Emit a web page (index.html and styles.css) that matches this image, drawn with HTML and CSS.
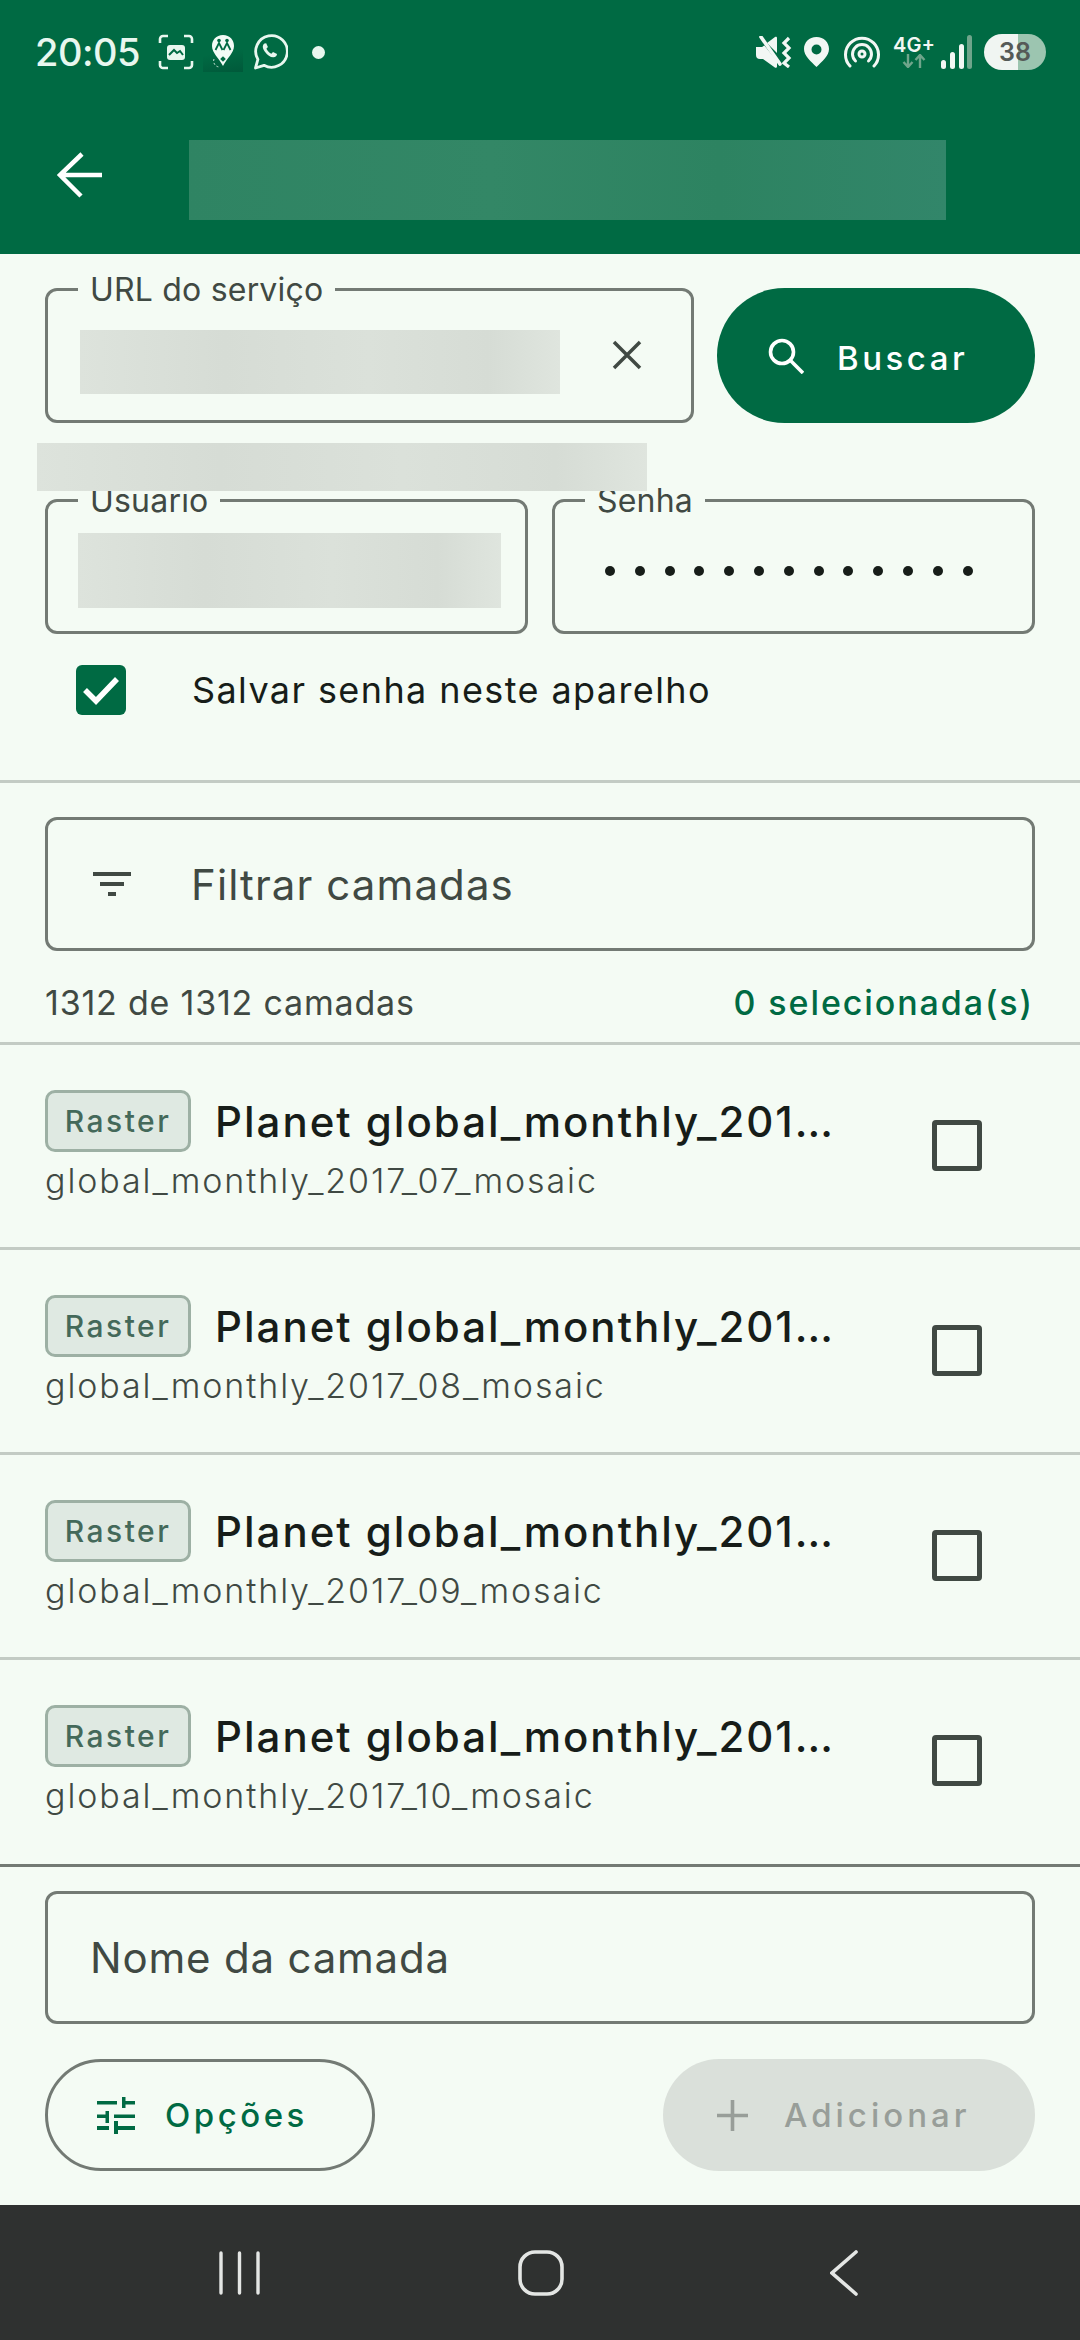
FILE: index.html
```html
<!DOCTYPE html>
<html lang="pt">
<head>
    <meta charset="UTF-8">
    <title>Camadas</title>
    <link rel="stylesheet" href="styles.css">
</head>
<body>
<div class="screen">
    <header class="top">
        <div class="status">
            <div class="status-left">
                <span class="clock">20:05</span>
                <svg class="ic-shot" viewBox="0 0 36 36" fill="none" stroke="#e8f7ef" stroke-width="2.6">
                    <path d="M2 9V5a3 3 0 0 1 3-3h5M26 2h5a3 3 0 0 1 3 3v4M34 27v4a3 3 0 0 1-3 3h-5M10 34H5a3 3 0 0 1-3-3v-4"/>
                    <rect x="9" y="11" width="18" height="15" rx="3" fill="#e8f7ef" stroke="none"/>
                    <path d="M11 21l5-5 3 3 3-2 3 4" stroke="#006a43" stroke-width="2"/>
                </svg>
                <span class="tile">
                    <svg viewBox="0 0 40 40" width="40" height="40">
                        <path d="M20 3c-7 0-11 5-11 11 0 7 7 12 11 20 4-8 11-13 11-20 0-6-4-11-11-11z" fill="#f2fbf6"/>
                        <circle cx="16" cy="8.500" r="1.800" fill="#006a43"/>
                        <circle cx="24" cy="8.500" r="1.800" fill="#006a43"/>
                        <path d="M12.500 18l3.500-7 3.500 7M20.500 18l3.500-7 3.500 7" fill="none" stroke="#006a43" stroke-width="1.800"/>
                        <path d="M11 27a6 6 0 0 0 6 8" fill="none" stroke="#cfe8da" stroke-width="1" stroke-dasharray="2 2"/>
                        <rect x="18" y="25" width="4" height="4" transform="rotate(45 20 27)" fill="#006a43"/>
                    </svg>
                </span>
                <svg class="ic-wa" viewBox="0 0 36 38" fill="none" stroke="#e8f7ef" stroke-width="2.800">
                    <path d="M3.500 35l2.400-8.600A15.800 15.800 0 1 1 12 32.300z" stroke-linejoin="round"/>
                    <path d="M12.500 10.500c-2 1.500-2.500 4 .2 8 2.800 4 6 6 8.800 5.800 2-.2 3.500-1.600 3.500-3.300l-4-2-1.600 1.800c-2-.8-4-2.800-5-5l1.500-1.700-1.700-3.900z" fill="#e8f7ef" stroke="none"/>
                </svg>
                <span class="dot"></span>
            </div>
            <div class="status-right">
                <svg class="ic-mute" viewBox="0 0 36 32" fill="#f2f7f4">
                    <path d="M0 11h6l3-2 12 12v9.500c0 1.500-1.500 1.700-2.500.8L7 23H4a4 4 0 0 1-4-4zM11 7l8-6c1-.8 2-.2 2 1v15z"/>
                    <path d="M2 -1l24 30" stroke="#006a43" stroke-width="3"/>
                    <path d="M5 1l19 27" stroke="#f2f7f4" stroke-width="3.600" stroke-linecap="round"/>
                    <path d="M33 2l-5 5 5 5-5 5 5 5-5 5 5 4" fill="none" stroke="#f2f7f4" stroke-width="3.200"/>
                </svg>
                <svg class="ic-pin" viewBox="0 0 25 30">
                    <path fill-rule="evenodd" fill="#f2f7f4" d="M12.500 0C5 0 0 5.500 0 12c0 7 7 12.500 12.500 18C18 24.500 25 19 25 12 25 5.500 20 0 12.500 0zm0 7.500a5 5 0 1 1 0 10 5 5 0 0 1 0-10z"/>
                </svg>
                <svg class="ic-cast" viewBox="0 0 36 32" fill="none" stroke="#f2f7f4" stroke-width="3" stroke-linecap="round">
                    <path d="M6 30A16.500 16.500 0 1 1 30 30"/>
                    <path d="M11.500 25a9.500 9.500 0 1 1 13 0"/>
                    <circle cx="18" cy="18" r="3"/>
                </svg>
                <div class="net">
                    <span class="net-label">4G+</span>
                    <svg viewBox="0 0 24 14" width="24" height="14" fill="none" stroke="#6fa58b" stroke-width="2.400">
                        <path d="M6 0v12M1.500 8L6 13l4.500-5M18 14V2M13.500 6L18 1l4.500 5"/>
                    </svg>
                </div>
                <svg class="ic-signal" viewBox="0 0 31 34">
                    <rect x="0" y="25" width="5" height="9" rx="2.500" fill="#f2f7f4"/>
                    <rect x="9" y="17" width="5" height="17" rx="2.500" fill="#f2f7f4"/>
                    <rect x="18" y="9" width="5" height="25" rx="2.500" fill="#f2f7f4"/>
                    <rect x="26" y="0" width="5" height="34" rx="2.500" fill="#6fa58b"/>
                </svg>
                <span class="battery">38</span>
            </div>
        </div>
        <div class="toolbar">
            <svg class="ic-back" viewBox="0 0 46 46" fill="none" stroke="#fff" stroke-width="4.500">
                <path d="M46 23H4M26 2L4 23l21 21"/>
            </svg>
            <div class="blur blur-title"></div>
        </div>
    </header>

    <main class="content">
        <section class="connect">
            <div class="url-row">
                <div class="field field-url">
                    <span class="field-label">URL do serviço</span>
                    <div class="blur blur-url"></div>
                    <svg class="ic-clear" viewBox="0 0 30 30" fill="none" stroke="#404943" stroke-width="3.500">
                        <path d="M2 2l26 26M28 2L2 28"/>
                    </svg>
                </div>
                <button class="btn btn-fill">
                    <svg class="ic-search" viewBox="0 0 36 36" fill="none" stroke="#fff" stroke-width="3.600">
                        <circle cx="14" cy="14" r="11.500"/>
                        <path d="M22 22l13 13"/>
                    </svg>
                    <span class="btn-text">Buscar</span>
                </button>
            </div>
            <div class="blur blur-msg"></div>
            <div class="login-row">
                <div class="field field-half">
                    <span class="field-label">Usuario</span>
                    <div class="blur blur-user"></div>
                </div>
                <div class="field field-half">
                    <span class="field-label">Senha</span>
                    <div class="dots">
                        <i></i><i></i><i></i><i></i><i></i><i></i><i></i><i></i><i></i><i></i><i></i><i></i><i></i>
                    </div>
                </div>
            </div>
            <label class="save">
                <span class="check">
                    <svg viewBox="0 0 50 50" width="50" height="50" fill="none" stroke="#fff" stroke-width="5.500">
                        <path d="M9 25l11 11 21-22"/>
                    </svg>
                </span>
                Salvar senha neste aparelho
            </label>
        </section>

        <section class="filter-box">
            <div class="field field-filter">
                <svg class="ic-filter" viewBox="0 0 38 25" fill="#404943">
                    <rect x="0" y="0" width="38" height="4"/>
                    <rect x="7" y="10" width="24" height="4"/>
                    <rect x="15" y="20" width="8" height="4"/>
                </svg>
                <span class="filter-text">Filtrar camadas</span>
            </div>
            <div class="counts">
                <span>1312 de 1312 camadas</span>
                <span class="selected">0 selecionada(s)</span>
            </div>
        </section>

        <ul class="layers">
            <li class="layer">
                <div class="layer-text">
                    <div class="layer-head"><span class="chip">Raster</span><span class="layer-title">Planet global_monthly_201…</span></div>
                    <div class="layer-sub">global_monthly_2017_07_mosaic</div>
                </div>
                <span class="box"></span>
            </li>
            <li class="layer">
                <div class="layer-text">
                    <div class="layer-head"><span class="chip">Raster</span><span class="layer-title">Planet global_monthly_201…</span></div>
                    <div class="layer-sub">global_monthly_2017_08_mosaic</div>
                </div>
                <span class="box"></span>
            </li>
            <li class="layer">
                <div class="layer-text">
                    <div class="layer-head"><span class="chip">Raster</span><span class="layer-title">Planet global_monthly_201…</span></div>
                    <div class="layer-sub">global_monthly_2017_09_mosaic</div>
                </div>
                <span class="box"></span>
            </li>
            <li class="layer">
                <div class="layer-text">
                    <div class="layer-head"><span class="chip">Raster</span><span class="layer-title">Planet global_monthly_201…</span></div>
                    <div class="layer-sub">global_monthly_2017_10_mosaic</div>
                </div>
                <span class="box"></span>
            </li>
        </ul>

        <section class="bottom">
            <div class="field field-name">Nome da camada</div>
            <div class="actions">
                <button class="btn btn-outline">
                    <svg class="ic-tune" viewBox="0 0 38 37" fill="#006a43">
                        <path d="M0 4h20v3.500H0zM25 0h3.500v4H38v3.500h-9.500V11H25zM0 17.500h8.500V14H12v12H8.500v-5H0zM17 17.500h21V21H17zM0 29h12v4H0zM17 24h4v5h17v4H21v4h-4z"/>
                    </svg>
                    Opções
                </button>
                <button class="btn btn-off">
                    <svg class="ic-plus" viewBox="0 0 31 31" fill="none" stroke="#989e99" stroke-width="3.600">
                        <path d="M15.500 0v31M0 15.500h31"/>
                    </svg>
                    Adicionar
                </button>
            </div>
        </section>
    </main>

    <nav class="navbar">
        <svg class="ic-recents" viewBox="0 0 41 44" fill="none" stroke="#e4e6e4" stroke-width="3.400" stroke-linecap="round">
            <path d="M2 2v40M20.500 2v40M39 2v40"/>
        </svg>
        <svg class="ic-home" viewBox="0 0 46 46" fill="none" stroke="#e4e6e4" stroke-width="3.600">
            <rect x="2" y="2" width="42" height="42" rx="15"/>
        </svg>
        <svg class="ic-navback" viewBox="0 0 28 46" fill="none" stroke="#e4e6e4" stroke-width="3.600" stroke-linecap="round">
            <path d="M26 2L2 23l24 21"/>
        </svg>
    </nav>
</div>
</body>
</html>
```

FILE: styles.css
```css
* {
    box-sizing: border-box;
}

body {
    margin: 0;
    background: #f4fbf4;
    font-family: "Inter", "Noto Sans", sans-serif;
    color: #171d19;
}

.screen {
    width: 1080px;
    height: 2340px;
    display: flex;
    flex-direction: column;
    overflow: hidden;
}

/* top */
.top {
    background: #006a43;
    height: 254px;
    flex: none;
}

.status {
    height: 104px;
    padding: 32px 34px 0 35px;
    display: flex;
    justify-content: space-between;
    align-items: flex-start;
}

.status-left,
.status-right {
    display: flex;
    align-items: center;
    height: 40px;
}

.clock {
    font-size: 38px;
    font-weight: 500;
    letter-spacing: -0.5px;
    color: #e8f7ef;
    width: 123px;
}

.ic-shot {
    width: 36px;
    height: 36px;
    margin-right: 9px;
}

.tile {
    width: 40px;
    height: 40px;
    margin-right: 9px;
    background: linear-gradient(170deg, #006a43 50%, #00593a);
}

.ic-wa {
    width: 36px;
    height: 38px;
}

.dot {
    width: 13px;
    height: 13px;
    border-radius: 50%;
    background: #e8f7ef;
    margin-left: 24px;
}

.ic-mute {
    width: 36px;
    height: 32px;
    margin-right: 12px;
}

.ic-pin {
    width: 25px;
    height: 30px;
    margin-right: 15px;
}

.ic-cast {
    width: 36px;
    height: 32px;
    margin-right: 13px;
}

.net {
    width: 42px;
    margin-right: 6px;
    display: flex;
    flex-direction: column;
    align-items: center;
    line-height: 18px;
}

.net-label {
    font-size: 20px;
    font-weight: 600;
    color: #f2f7f4;
    white-space: nowrap;
}

.ic-signal {
    width: 31px;
    height: 34px;
    margin-right: 12px;
}

.battery {
    width: 62px;
    height: 36px;
    border-radius: 18px;
    background: linear-gradient(90deg, #f0f5f2 0 55%, #9cc5b0 55%);
    color: #555a57;
    font-size: 25px;
    font-weight: 600;
    text-align: center;
    line-height: 36px;
}

.toolbar {
    height: 150px;
    display: flex;
    align-items: flex-start;
    padding: 36px 0 0 56px;
}

.ic-back {
    width: 46px;
    height: 46px;
    margin-top: 12px;
}

.blur {
    background: linear-gradient(90deg, #dde3dc, #d6dcd5 30%, #dbe1da 60%, #d6dcd5 85%, #dfe5de);
}

.blur-title {
    width: 757px;
    height: 80px;
    margin-left: 87px;
    background: linear-gradient(90deg, #2f8463, #338766 40%, #2d8361 70%, #32866a);
}

/* form */
.content {
    flex: 1;
    display: flex;
    flex-direction: column;
}

.connect {
    padding: 34px 45px 0;
    height: 529px;
    flex: none;
    border-bottom: 3px solid #c3cbc4;
}

.url-row {
    display: flex;
    gap: 23px;
}

.field {
    position: relative;
    border: 3px solid #737a74;
    border-radius: 12px;
    height: 135px;
}

.field-label {
    position: absolute;
    left: 30px;
    top: -19px;
    padding: 0 12px;
    background: #f4fbf4;
    font-size: 32px;
    line-height: 36px;
    letter-spacing: 0.200px;
    color: #404943;
    white-space: nowrap;
}

.field-url {
    width: 649px;
    display: flex;
    align-items: flex-start;
    padding: 39px 0 0 32px;
}

.blur-url {
    width: 480px;
    height: 64px;
}

.ic-clear {
    width: 30px;
    height: 30px;
    margin: 10px 0 0 52px;
}

.btn {
    display: flex;
    align-items: center;
    border-radius: 60px;
    font-family: inherit;
    font-weight: 500;
    font-size: 33px;
    letter-spacing: 3.500px;
    border: 0;
    padding: 0;
}

.btn-fill {
    width: 318px;
    height: 135px;
    background: #006a43;
    color: #fff;
    padding: 0 0 0 51px;
    border-radius: 68px;
}

.btn-text {
    padding-top: 4px;
}

.ic-search {
    width: 36px;
    height: 36px;
    margin: 0 33px 0 0;
}

.blur-msg {
    position: relative;
    z-index: 1;
    width: 610px;
    height: 48px;
    margin: 20px 0 8px -8px;
}

.login-row {
    display: flex;
    gap: 24px;
}

.field-half {
    width: 483px;
}

.blur-user {
    width: 423px;
    height: 75px;
    margin: 31px 0 0 30px;
}

.dots {
    display: flex;
    gap: 19.800px;
    padding: 64px 0 0 50px;
}

.dots i {
    width: 10px;
    height: 10px;
    border-radius: 50%;
    background: #171d19;
}

.save {
    display: flex;
    align-items: center;
    padding: 31px 0 0 31px;
    font-size: 36px;
    letter-spacing: 1.400px;
    color: #171d19;
}

.check {
    width: 50px;
    height: 50px;
    border-radius: 6px;
    background: #006a43;
    margin-right: 66px;
    display: block;
}

.filter-box {
    padding: 34px 45px 0;
    height: 262px;
    flex: none;
    border-bottom: 3px solid #c3cbc4;
}

.field-filter {
    height: 134px;
    display: flex;
    align-items: center;
    padding-left: 45px;
}

.ic-filter {
    width: 38px;
    height: 25px;
}

.filter-text {
    margin-left: 60px;
    font-size: 42px;
    letter-spacing: 1.100px;
    color: #404943;
}

.counts {
    display: flex;
    justify-content: space-between;
    padding-top: 31px;
    font-size: 34px;
    letter-spacing: 0.800px;
    color: #404943;
}

.selected {
    color: #006a43;
    font-weight: 500;
    letter-spacing: 1.900px;
    padding-right: 1px;
}

/* list */
.layers {
    list-style: none;
    margin: 0;
    padding: 0;
}

.layer {
    height: 205px;
    display: flex;
    justify-content: space-between;
    padding: 45px 98px 0 45px;
    border-bottom: 3px solid #c3cbc4;
}

.layer:last-child {
    height: 207px;
    border-bottom-color: #737a74;
}

.layer-head {
    display: flex;
    align-items: center;
}

.chip {
    width: 146px;
    height: 62px;
    border: 3px solid #9db0a4;
    border-radius: 10px;
    background: #dfe9e2;
    color: #44695a;
    font-size: 30px;
    font-weight: 500;
    line-height: 56px;
    text-align: center;
    letter-spacing: 2.500px;
}

.layer-title {
    margin-left: 24px;
    font-size: 42px;
    font-weight: 500;
    letter-spacing: 2px;
    color: #171d19;
    white-space: nowrap;
}

.layer-sub {
    margin-top: 8px;
    font-size: 34px;
    font-weight: 300;
    letter-spacing: 1.900px;
    color: #404943;
}

.box {
    width: 50px;
    height: 51px;
    margin-top: 30px;
    border: 5px solid #404943;
    border-radius: 4px;
}

/* bottom */
.bottom {
    padding: 24px 45px 0;
}

.field-name {
    height: 133px;
    padding: 0 0 0 42px;
    display: flex;
    align-items: center;
    font-size: 42px;
    letter-spacing: 0.800px;
    color: #404943;
}

.actions {
    display: flex;
    justify-content: space-between;
    margin-top: 35px;
}

.btn-outline {
    width: 330px;
    height: 112px;
    border: 3px solid #737a74;
    border-radius: 56px;
    background: none;
    color: #006a43;
    padding-left: 49px;
}

.ic-tune {
    width: 38px;
    height: 37px;
    margin-right: 30px;
}

.btn-off {
    width: 372px;
    height: 112px;
    border-radius: 56px;
    background: #dae0da;
    color: #989e99;
    letter-spacing: 4px;
    padding-left: 54px;
}

.ic-plus {
    width: 31px;
    height: 31px;
    margin-right: 36px;
}

/* nav */
.navbar {
    flex: none;
    height: 135px;
    background: #2f3130;
    display: flex;
    align-items: center;
    padding: 0 222px 0 219px;
    justify-content: space-between;
}

.ic-recents {
    width: 41px;
    height: 44px;
}

.ic-home {
    width: 46px;
    height: 46px;
    margin-right: 8px;
}

.ic-navback {
    width: 28px;
    height: 46px;
}
```
